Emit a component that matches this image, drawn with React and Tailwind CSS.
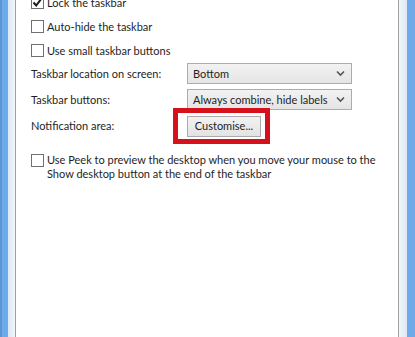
import React from "react";

function Box({ checked }) {
  return (
    <div className="w-[13px] h-[13px] border border-[#707070] bg-white shrink-0 flex items-center justify-center">
      {checked && (
        <svg width="11" height="11" viewBox="0 0 11 11">
          <path d="M1.5 5.5 L4.2 8.5 L9.5 1.5" stroke="#1a1a1a" strokeWidth="2" fill="none" />
        </svg>
      )}
    </div>
  );
}

function Select({ label }) {
  return (
    <div className="w-[165px] shrink-0 h-[21px] border border-[#acacac] bg-gradient-to-b from-[#f2f2f2] to-[#e5e5e5] flex items-center pl-[5px] pr-[6px] whitespace-nowrap">
      <span className="flex-1">{label}</span>
      <svg width="9" height="7" viewBox="0 0 9 7">
        <path d="M1 1.5 L4.5 5 L8 1.5" stroke="#555" strokeWidth="1.6" fill="none" />
      </svg>
    </div>
  );
}

export default function App() {
  return (
    <div
      className="w-[415px] h-[337px] flex overflow-hidden text-[11px] text-[#1e1e1e] leading-[14px] whitespace-nowrap"
      style={{ fontFamily: 'Lato, "Open Sans", sans-serif' }}
    >
      <div className="w-[2px] shrink-0 bg-[#5b95d6]" />
      <div className="w-[6px] shrink-0 bg-[#6eaaea]" />
      <div className="w-[7px] shrink-0 bg-gradient-to-r from-[#dde9f3] to-[#f2f6f8]" />
      <div className="w-[1px] shrink-0 bg-[#a0a0a0]" />
      <div className="flex-1 min-w-0 bg-white pl-[15px] pr-[4px] flex flex-col">
        <div className="-mt-[4px] flex items-center gap-[3px] h-[13px]">
          <Box checked />
          <span>Lock the taskbar</span>
        </div>
        <div className="mt-[11px] flex items-center gap-[3px] h-[13px]">
          <Box />
          <span>Auto-hide the taskbar</span>
        </div>
        <div className="mt-[11px] flex items-center gap-[3px] h-[13px]">
          <Box />
          <span>Use small taskbar buttons</span>
        </div>
        <div className="mt-[6px] flex items-center h-[21px]">
          <span className="w-[156px] shrink-0">Taskbar location on screen:</span>
          <Select label="Bottom" />
        </div>
        <div className="mt-[5px] flex items-center h-[21px]">
          <span className="w-[156px] shrink-0">Taskbar buttons:</span>
          <Select label="Always combine, hide labels" />
        </div>
        <div className="mt-[5px] flex items-center h-[22px]">
          <span className="w-[156px] shrink-0">Notification area:</span>
          <div className="relative">
            <div className="w-[74px] h-[21px] border border-[#acacac] bg-gradient-to-b from-[#f2f2f2] to-[#e3e3e3] flex items-center justify-center">
              Customise...
            </div>
            <div className="absolute left-[-14px] top-[-8px] w-[97px] h-[36px] border-[5px] border-[#d5121b]" />
          </div>
        </div>
        <div className="mt-[16px] flex items-start gap-[3px]">
          <div className="mt-[1px]"><Box /></div>
          <span className="leading-[14px]">
            Use Peek to preview the desktop when you move your mouse to the
            <br />
            Show desktop button at the end of the taskbar
          </span>
        </div>
      </div>
      <div className="w-[1px] shrink-0 bg-[#a0a0a0]" />
      <div className="w-[8px] shrink-0 bg-gradient-to-r from-[#f2f6f8] to-[#dde9f3]" />
      <div className="w-[8px] shrink-0 bg-[#6eaaea]" />
    </div>
  );
}
